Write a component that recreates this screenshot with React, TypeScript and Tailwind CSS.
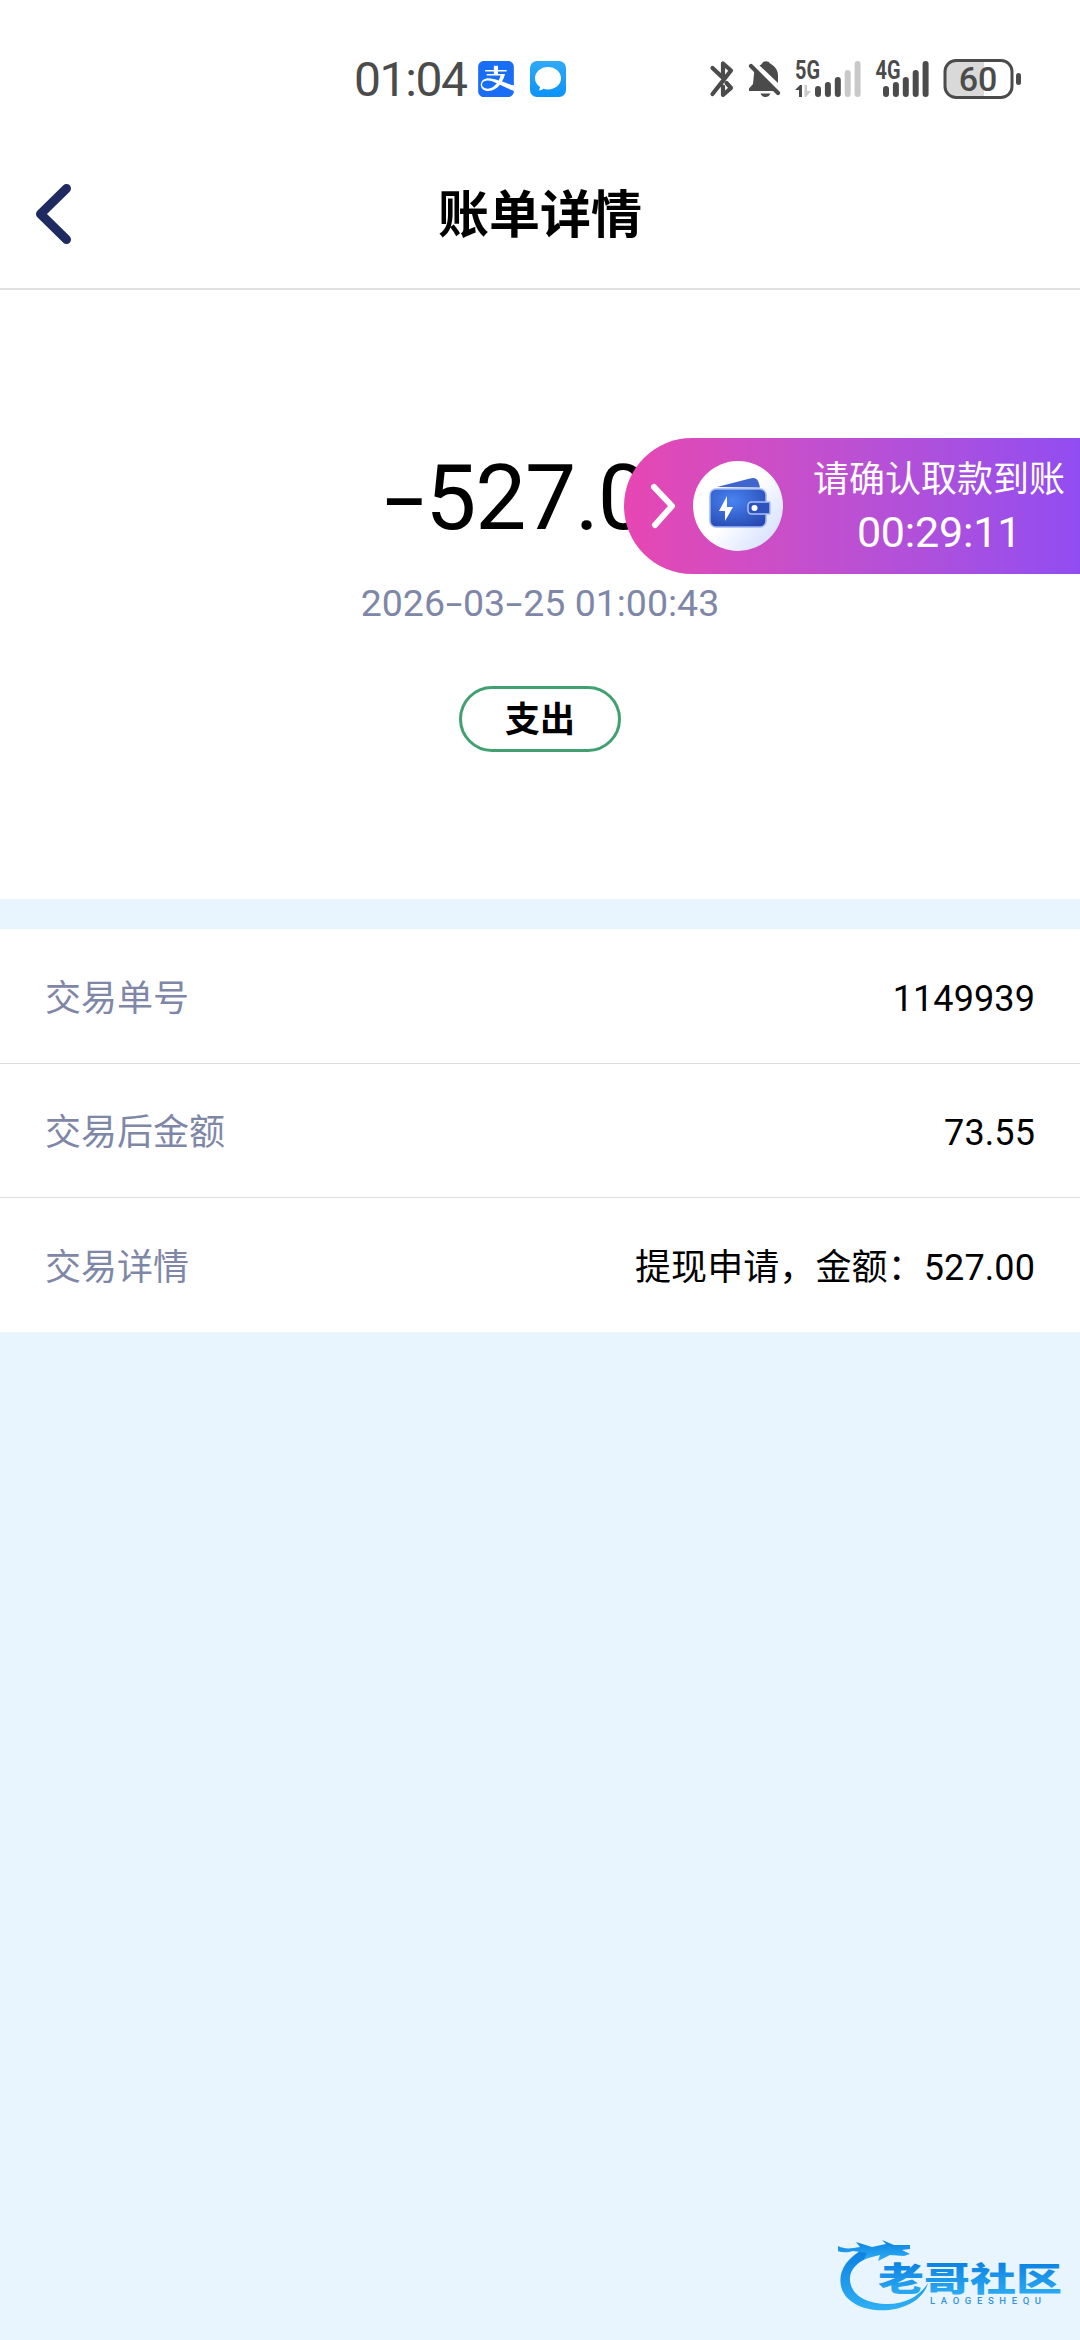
import { clsx } from "clsx";
import { SiAlipay } from "react-icons/si";

const details = [
  { label: "交易单号", value: "1149939" },
  { label: "交易后金额", value: "73.55" },
  { label: "交易详情", value: "提现申请，金额：527.00" },
];

export default function App() {
  return (
    <div className="relative flex h-[2340px] w-[1080px] flex-col overflow-hidden bg-[#e8f5ff] font-['Roboto','Noto_Sans_CJK_SC',sans-serif] text-black">
      <StatusBar />
      <Header />
      <Summary />
      <div className="mt-[30px]">
        {details.map((d, i) => (
          <DetailRow key={d.label} label={d.label} value={d.value} first={i === 0} last={i === details.length - 1} />
        ))}
      </div>
      <WithdrawBanner />
      <Watermark />
    </div>
  );
}

function StatusBar() {
  return (
    <div className="flex h-[158px] items-center bg-white pl-[354px] text-[#4b4b4b]">
      <span className="w-[124px] pt-[2px] text-[48px] leading-[36px] tracking-[-1.4px]">01:04</span>
      <SiAlipay className="h-9 w-9 text-[#1a6df5]" />
      <svg className="ml-4 h-9 w-9" viewBox="0 0 36 36">
        <defs>
          <linearGradient id="chat" x1="0" y1="0" x2="0" y2="1">
            <stop offset="0" stopColor="#31a9f7" />
            <stop offset="1" stopColor="#0b93f6" />
          </linearGradient>
        </defs>
        <rect width="36" height="36" rx="7" fill="url(#chat)" />
        <path d="M18 6c7.200 0 13 4.900 13 11.200s-5.800 11.200-13 11.200c-1.600 0-3.200-.2-4.600-.7-1.300 1-3 1.700-4.900 1.700 1-1 1.500-2.300 1.500-3.500-3-2-5-5-5-8.700 0-6.300 5.800-11.200 13-11.200z" fill="#fff" />
      </svg>
      <StatusIcons />
    </div>
  );
}

function StatusIcons() {
  return (
    <svg className="ml-[134px] h-[60px] w-[330px]" viewBox="700 49 330 60" fill="#4b4b4b">
      {/* bluetooth */}
      <path
        d="M712.500 68L722 77M712.500 94L731 70.500L723 63.500V78M723 86.500V95L731 88L726.500 83"
        fill="none"
        stroke="#4b4b4b"
        strokeWidth="4.200"
        strokeLinecap="round"
        strokeLinejoin="round"
      />
      {/* muted bell */}
      <path d="M751 66L778 93" stroke="#4b4b4b" strokeWidth="4.200" strokeLinecap="round" />
      <path d="M754.500 69L775 91H749v-2.500l4-4.500z" />
      <path d="M759.500 65.500c1.500-.8 2-1 2.500-2 1.500-3 6.500-3 8 0 5 2.500 8 6.500 8 12v7.500z" />
      <path d="M760.500 93.500h10c-1 2.500-3 3.500-5 3.500s-4-1-5-3.500z" />
      {/* 5G */}
      <text x="795" y="79" fontSize="25" fontWeight="700" textLength="25" lengthAdjust="spacingAndGlyphs">5G</text>
      <path d="M795 90l5-5h2v12h-3v-7z" />
      <path d="M804.500 85h2.500v6h4l-5 6h-1.500z" fill="#c9c9c9" />
      <Bars x={815} heights={[11, 15, 20, 27, 36]} active={3} />
      {/* 4G */}
      <text x="875.500" y="79" fontSize="25" fontWeight="700" textLength="25" lengthAdjust="spacingAndGlyphs">4G</text>
      <Bars x={883} heights={[11, 15, 20, 27, 36]} active={5} />
      {/* battery */}
      <path d="M956 60h28v37h-28a11 11 0 0 1-11-11V71a11 11 0 0 1 11-11z" fill="#d9d9d9" />
      <rect x="945" y="60.500" width="67" height="37" rx="11" fill="none" stroke="#4b4b4b" strokeWidth="3" />
      <rect x="1016" y="73" width="5" height="12" rx="2.500" />
      <text x="978" y="91" fontSize="34" fontWeight="500" textAnchor="middle">60</text>
    </svg>
  );
}

function Bars({ x, heights, active }: { x: number; heights: number[]; active: number }) {
  return (
    <>
      {heights.map((h, i) => (
        <rect key={h} x={x + i * 9.9} y={97 - h} width="6" height={h} rx="3" fill={i < active ? "#4b4b4b" : "#c9c9c9"} />
      ))}
    </>
  );
}

function Header() {
  return (
    <div className="flex h-[132px] items-center border-b-2 border-[#e0e0e0] bg-white px-[34px] pb-[19px]">
      <svg className="h-[62px] w-[40px]" viewBox="0 0 40 62" fill="none">
        <path d="M32.500 5.500L6.500 31L32.500 56.500" stroke="#1f2a60" strokeWidth="9" strokeLinecap="round" strokeLinejoin="round" />
      </svg>
      <h1 className="flex-1 pt-[5px] pr-[40px] text-center text-[51px] leading-[60px] font-bold">账单详情</h1>
    </div>
  );
}

function Summary() {
  return (
    <div className="flex h-[609px] flex-col items-center bg-white pt-[155px]">
      <div className="flex h-[106px] items-center text-[91px] leading-[106px] tracking-[-1.2px]">
        <span className="inline-block w-[43px] scale-x-160 text-center">-</span>
        <span>527.00</span>
      </div>
      <div className="mt-[30px] text-[37.5px] leading-[44px] text-[#7f87a8]">
        2026<Dash />03<Dash />25 01:00:43
      </div>
      <div className="mt-[61px] flex h-[66px] w-[162px] items-center justify-center rounded-full border-3 border-[#41a06f] pt-[4px] text-[35px] font-bold">
        支出
      </div>
    </div>
  );
}

function Dash() {
  return <span className="inline-block w-[18px] scale-x-160 text-center">-</span>;
}

function DetailRow({ label, value, first, last }: { label: string; value: string; first: boolean; last: boolean }) {
  return (
    <div
      className={clsx(
        "flex items-center justify-between bg-white px-[45px] pt-[5px] text-[36px]",
        first ? "h-[135px]" : "h-[134px]",
        !last && "border-b border-[#dcdcdc]",
      )}
    >
      <span className="text-[#7f87a8]">{label}</span>
      <span className="tracking-[0.1px]">{value}</span>
    </div>
  );
}

function WithdrawBanner() {
  return (
    <div className="absolute top-[438px] right-0 flex h-[136px] w-[456px] items-center rounded-l-full bg-linear-to-r from-[#e746b2] to-[#914cf1] text-white">
      <svg className="ml-[26px] h-[46px] w-[28px]" viewBox="0 0 28 46" fill="none">
        <path d="M4 4L22 23L5 42" stroke="#fff" strokeWidth="6" strokeLinecap="round" strokeLinejoin="round" />
      </svg>
      <Wallet />
      <div className="ml-[30px] flex flex-col pt-[1px]">
        <span className="text-[36px] leading-[50px]">请确认取款到账</span>
        <span className="text-center text-[43px] leading-[54px] tracking-[-0.2px]">00:29:11</span>
      </div>
    </div>
  );
}

function Wallet() {
  return (
    <svg className="ml-[15px] h-[90px] w-[90px]" viewBox="0 0 90 90">
      <defs>
        <linearGradient id="disc" x1="0.3" y1="0.3" x2="1" y2="0.9">
          <stop offset="0.3" stopColor="#fff" />
          <stop offset="1" stopColor="#cfdcff" />
        </linearGradient>
        <radialGradient id="body" cx="0.4" cy="0.3" r="0.8">
          <stop offset="0" stopColor="#4884f2" />
          <stop offset="1" stopColor="#2748b0" />
        </radialGradient>
      </defs>
      <circle cx="45" cy="45" r="45" fill="url(#disc)" />
      <path d="M24 26L57 17.500q7-2 9 5l1 4z" fill="#3f66cc" />
      <rect x="17" y="28" width="56" height="38" rx="6" fill="url(#body)" stroke="#9db8f5" strokeWidth="1.500" />
      <path d="M77 41H59q-4 0-4 4v4q0 4 4 4h18z" fill="#2d52bd" stroke="#a9c0f7" strokeWidth="1.500" />
      <circle cx="61.500" cy="47" r="3" fill="#fff" />
      <path d="M34 35L26 50h6v10l8-14h-6z" fill="#fff" />
    </svg>
  );
}

function Watermark() {
  return (
    <svg className="absolute right-[15px] bottom-[22px] h-[82px] w-[227px]" viewBox="838 2236 227 82">
      <defs>
        <linearGradient id="mark" x1="0" y1="0" x2="0" y2="1">
          <stop offset="0" stopColor="#0b7fe0" />
          <stop offset="1" stopColor="#2fb0f5" />
        </linearGradient>
      </defs>
      <g fill="url(#mark)">
        <path d="M864 2249C846 2258 838 2272 841 2286C845 2304 867 2312 889 2310C908 2308 924 2298 928 2283C920 2296 905 2304 888 2304C866 2304 851 2295 850 2280C849 2270 858 2261 870 2257z" />
        <path d="M838 2246c8 4 14 2 22 1l-4-5 16 5 14-3-4-4 12 5 16 0 0 4-8 1 8 4-6 2-14-1-12 6 2-6-16 4 3-6-14-2c-6 2-16 2-21-3z" />
        <text x="878" y="2291" fontSize="33" fontWeight="900" textLength="184" lengthAdjust="spacingAndGlyphs">老哥社区</text>
      </g>
      <text x="930" y="2304" fontSize="9.500" fontWeight="500" fill="#3494dd" textLength="111">LAOGESHEQU</text>
    </svg>
  );
}
